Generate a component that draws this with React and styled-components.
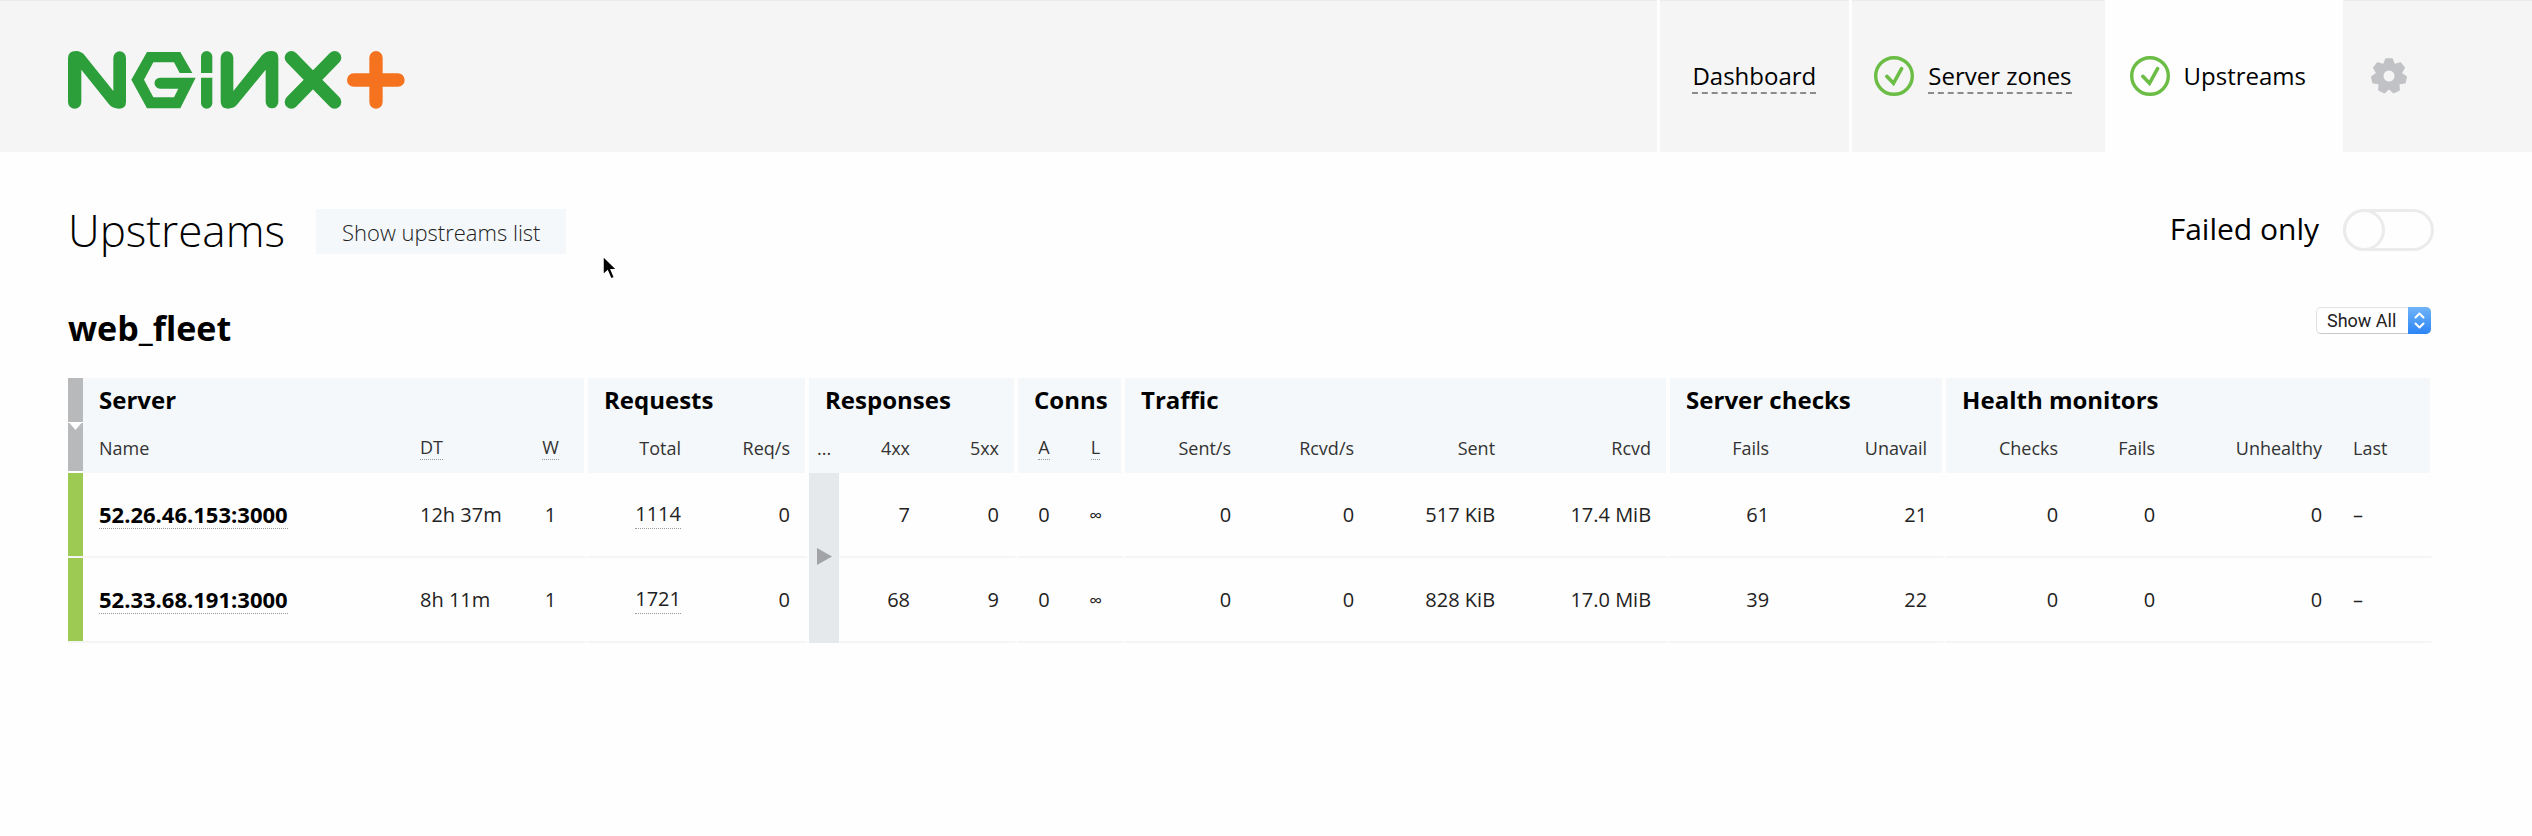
import React, { useState } from "react";
import styled, { createGlobalStyle, css } from "styled-components";

const GlobalStyle = createGlobalStyle`
  *, *::before { box-sizing: border-box; }
  body {
    margin: 0;
    background: #fefefe;
    color: #000;
    font-family: "Open Sans", "Noto Sans", sans-serif;
  }
`;

const Page = styled.div`
  position: relative;
  min-height: 100vh;
`;

const Header = styled.header`
  display: flex;
  height: 152px;
  padding-left: 68px;
  background: #f5f5f5;
  box-shadow: inset 0 1px #ebebeb;
`;

const LogoLink = styled.a`
  display: flex;
  align-items: center;
  height: 160px;
`;

const Nav = styled.nav`
  display: flex;
  margin-left: auto;
`;

const NavLink = styled.a`
  display: flex;
  align-items: center;
  gap: 14px;
  padding-left: ${(p) => (p.$icon ? "22px" : "32px")};
  padding-right: ${(p) => (p.$active ? "37px" : "33px")};
  border-left: 3px solid #fefefe;
  background: ${(p) => (p.$active ? "#fefefe" : "transparent")};
  color: #000;
  font-size: 24px;
  line-height: 32px;
  text-decoration: none;
`;

const NavText = styled.span`
  padding-top: 2px;
  border-bottom: 2px dashed ${(p) => (p.$active ? "transparent" : "#8c8c8c")};
`;

const SettingsButton = styled.button`
  display: flex;
  align-items: center;
  width: 189px;
  padding: 0 0 0 27px;
  border: 0;
  background: transparent;
`;

const Main = styled.main`
  padding: 57px 98px 60px 68px;
`;

const TitleBar = styled.div`
  display: flex;
  align-items: flex-start;
`;

const Title = styled.h1`
  margin: 0 31px 0 0;
  font-size: 44px;
  font-weight: 300;
  line-height: 42px;
`;

const ListButton = styled.button`
  height: 45px;
  padding: 0 26px;
  border: 0;
  background: #f4f8fa;
  color: #222;
  font: 300 22px/42px "Open Sans", sans-serif;
`;

const FailedOnly = styled.label`
  display: flex;
  gap: 24px;
  margin-left: auto;
  font-size: 30px;
  line-height: 40px;
`;

const Toggle = styled.input`
  appearance: none;
  display: flex;
  width: 91px;
  height: 42px;
  margin: 0;
  border-radius: 21px;
  box-shadow: inset 0 0 0 3px #ebebeb;

  &::before {
    content: "";
    width: 42px;
    height: 42px;
    border: 3px solid #ebebeb;
    border-radius: 50%;
  }

  &:checked {
    justify-content: flex-end;
    background: #d9efcf;
  }
`;

const GroupBar = styled.div`
  display: flex;
  justify-content: space-between;
  align-items: flex-start;
  margin: 52px 3px 28px 0;
`;

const GroupTitle = styled.h2`
  margin: 0;
  font-size: 34px;
  font-weight: 700;
  line-height: 44px;
`;

const SelectBox = styled.div`
  position: relative;
  width: 115px;
  height: 27px;
  margin-top: 1px;
`;

const Select = styled.select`
  appearance: none;
  width: 100%;
  height: 100%;
  padding: 0 0 0 10px;
  border: 1px solid #e2e2e2;
  border-bottom-color: #c8c8c8;
  border-radius: 5px;
  background: #fff;
  color: #222;
  font: 18px/24px Roboto, sans-serif;
`;

const SelectArrows = styled.span`
  position: absolute;
  top: 0;
  right: 0;
  bottom: 0;
  display: flex;
  align-items: center;
  justify-content: center;
  width: 23px;
  border-radius: 0 5px 5px 0;
  background: linear-gradient(#70b4f8, #2c85f5);
  pointer-events: none;
`;

const Table = styled.table`
  width: 100%;
  table-layout: fixed;
  border-collapse: separate;
  border-spacing: 0;
`;

const groupEnd = css`
  border-right: 4px solid #fefefe;
`;

const GroupHead = styled.th`
  height: 44px;
  padding: 0 0 0 16px;
  ${groupEnd}
  background: #f4f8fa;
  font-size: 24px;
  font-weight: 700;
  line-height: 44px;
  text-align: left;
  vertical-align: top;
  white-space: nowrap;
`;

const ColumnHead = styled.th`
  height: 51px;
  padding: ${(p) => (p.$align === "center" ? "0" : "0 15px 0 16px")};
  ${(p) => p.$end && groupEnd}
  background: #f4f8fa;
  color: #333;
  font-size: 18px;
  font-weight: 400;
  line-height: 24px;
  text-align: ${(p) => p.$align};
  white-space: nowrap;
`;

const StripHead = styled.th`
  padding: 0;
  background: #b8b9bb;
  border-bottom: ${(p) => (p.$last ? "2px solid #fefefe" : "0")};
  vertical-align: top;
`;

const SortButton = styled.button`
  display: block;
  width: 100%;
  padding: 0;
  border: 0;
  background: transparent;
`;

const StatusStrip = styled.td`
  padding: 0;
  background: #9dca52;
  border-bottom: 2px solid #f4f4f4;
`;

const Cell = styled.td`
  height: 85px;
  padding: ${(p) => (p.$align === "center" ? "0" : "0 15px 0 16px")};
  border-bottom: 2px solid #f5f5f5;
  ${(p) => p.$end && groupEnd}
  color: #222;
  font-size: 20px;
  line-height: 28px;
  text-align: ${(p) => p.$align};
  white-space: nowrap;
`;

const CollapsedCell = styled.td`
  padding: 0;
  background: #e6e9ec;
`;

const ExpandButton = styled.button`
  display: block;
  margin: 0 auto;
  padding: 0;
  border: 0;
  background: transparent;
`;

const Hint = styled.abbr`
  display: inline-block;
  border-bottom: 1px dotted #999;
  text-decoration: none;
`;

const ServerLink = styled.a`
  display: inline-block;
  border-bottom: 1px dotted #999;
  color: #000;
  font-size: 22px;
  font-weight: 700;
  text-decoration: none;
`;

const Infinity = styled.span`
  font-size: 18px;
`;

const Pointer = styled.svg`
  position: absolute;
  top: 254px;
  left: 601px;
  pointer-events: none;
`;

const Logo = () => (
  <svg width="337" height="58" viewBox="85 62 1011 174" role="img" aria-label="NGINX Plus">
    <g fill="#2d9f3a">
      <path d="M85 84Q85 62 109 62Q125 62 136 76L221 182V82A19 19 0 0 1 259 82V214Q259 235 238 235Q219 235 208 222L125 118V215A20 20 0 0 1 85 215Z" />
      <path d="M275 148L322 65H422L458 128H420L403 96H341L313 148L341 201H403L416 175H361A16 16 0 0 1 361 142H468L422 234H322Z" />
      <path d="M484 128V79A17 17 0 0 1 518 79V128ZM484 142H518V218A17 17 0 0 1 484 218Z" />
      <path d="M543 82A19 19 0 0 1 581 82V182L667 75Q678 62 696 62Q716 62 716 84V215A19 19 0 0 1 678 215V118L593 222Q583 235 564 235Q543 235 543 213Z" />
    </g>
    <g fill="none" strokeWidth="40" strokeLinecap="round">
      <path stroke="#2d9f3a" d="M755 82L885 215M885 82L755 215" />
      <path stroke="#f5731f" d="M942 149H1075M1009 82V215" />
    </g>
  </svg>
);

const CheckIcon = () => (
  <svg width="40" height="40" viewBox="0 0 40 40" fill="none" stroke="#6bbd45" aria-hidden="true">
    <circle cx="20" cy="20" r="18.3" strokeWidth="3.4" />
    <path d="M12.8 20.3L19.5 27.3L27.6 12.6" strokeWidth="3.6" strokeLinecap="round" />
  </svg>
);

const teeth = [0, 1, 2, 3, 4, 5, 6];

const GearIcon = () => (
  <svg width="38" height="38" viewBox="-19 -19 38 38" aria-hidden="true">
    <circle r="9.5" fill="none" stroke="#c1c2c5" strokeWidth="8" />
    {teeth.map((n) => (
      <path
        key={n}
        d="M-5 -12L-3 -17H3L5 -12Z"
        fill="#c1c2c5"
        stroke="#c1c2c5"
        strokeWidth="1.6"
        strokeLinejoin="round"
        transform={`rotate(${(n * 360) / 7})`}
      />
    ))}
  </svg>
);

const GROUPS = [
  { title: "Server", span: 3 },
  { title: "Requests", span: 2 },
  { title: "Responses", span: 3 },
  { title: "Conns", span: 2 },
  { title: "Traffic", span: 4 },
  { title: "Server checks", span: 2 },
  { title: "Health monitors", span: 4 },
];

const COLUMNS = [
  { key: "name", label: "Name", width: 321, align: "left" },
  { key: "dt", label: "DT", width: 113, align: "left", hint: "Total downtime" },
  { key: "w", label: "W", width: 71, align: "center", hint: "Weight", end: true },
  { key: "total", label: "Total", width: 108, align: "right" },
  { key: "reqs", label: "Req/s", width: 113, align: "right", end: true },
  { key: "more", label: "...", width: 30, align: "center" },
  { key: "r4", label: "4xx", width: 86, align: "right" },
  { key: "r5", label: "5xx", width: 93, align: "right", end: true },
  { key: "active", label: "A", width: 52, align: "center", hint: "Active" },
  { key: "limit", label: "L", width: 55, align: "center", hint: "Limit", end: true },
  { key: "sentS", label: "Sent/s", width: 121, align: "right" },
  { key: "rcvdS", label: "Rcvd/s", width: 123, align: "right" },
  { key: "sent", label: "Sent", width: 141, align: "right" },
  { key: "rcvd", label: "Rcvd", width: 160, align: "right", end: true },
  { key: "fails", label: "Fails", width: 114, align: "right" },
  { key: "unavail", label: "Unavail", width: 162, align: "right", end: true },
  { key: "checks", label: "Checks", width: 127, align: "right" },
  { key: "hFails", label: "Fails", width: 97, align: "right" },
  { key: "unhealthy", label: "Unhealthy", width: 167, align: "right" },
  { key: "last", label: "Last", width: 97, align: "left", end: true },
];

const SERVERS = [
  {
    name: "52.26.46.153:3000", dt: "12h 37m", w: "1", total: "1114", reqs: "0", r4: "7", r5: "0",
    active: "0", limit: "∞", sentS: "0", rcvdS: "0", sent: "517 KiB", rcvd: "17.4 MiB",
    fails: "61", unavail: "21", checks: "0", hFails: "0", unhealthy: "0", last: "–",
  },
  {
    name: "52.33.68.191:3000", dt: "8h 11m", w: "1", total: "1721", reqs: "0", r4: "68", r5: "9",
    active: "0", limit: "∞", sentS: "0", rcvdS: "0", sent: "828 KiB", rcvd: "17.0 MiB",
    fails: "39", unavail: "22", checks: "0", hFails: "0", unhealthy: "0", last: "–",
  },
];

const renderValue = (key, value) => {
  if (key === "name") return <ServerLink href="#server">{value}</ServerLink>;
  if (key === "total") return <Hint>{value}</Hint>;
  if (key === "limit") return <Infinity>{value}</Infinity>;
  return value;
};

function ServerRow({ server, first }) {
  return (
    <tr>
      <StatusStrip />
      {COLUMNS.map((c) => {
        if (c.key === "more") {
          return first ? (
            <CollapsedCell key={c.key} rowSpan={SERVERS.length}>
              <ExpandButton aria-label="Expand responses">
                <svg width="15" height="17" viewBox="0 0 15 17" aria-hidden="true">
                  <path d="M0 0L15 8.5L0 17Z" fill="#a1a3a6" />
                </svg>
              </ExpandButton>
            </CollapsedCell>
          ) : null;
        }
        return (
          <Cell key={c.key} $align={c.align} $end={c.end}>
            {renderValue(c.key, server[c.key])}
          </Cell>
        );
      })}
    </tr>
  );
}

export default function App() {
  const [failedOnly, setFailedOnly] = useState(false);
  return (
    <Page>
      <GlobalStyle />
      <Header>
        <LogoLink href="#home">
          <Logo />
        </LogoLink>
        <Nav>
          <NavLink href="#dashboard">
            <NavText>Dashboard</NavText>
          </NavLink>
          <NavLink href="#zones" $icon>
            <CheckIcon />
            <NavText>Server zones</NavText>
          </NavLink>
          <NavLink href="#upstreams" $icon $active>
            <CheckIcon />
            <NavText $active>Upstreams</NavText>
          </NavLink>
        </Nav>
        <SettingsButton aria-label="Settings">
          <GearIcon />
        </SettingsButton>
      </Header>
      <Main>
        <TitleBar>
          <Title>Upstreams</Title>
          <ListButton>Show upstreams list</ListButton>
          <FailedOnly>
            Failed only
            <Toggle
              type="checkbox"
              checked={failedOnly}
              onChange={(e) => setFailedOnly(e.target.checked)}
            />
          </FailedOnly>
        </TitleBar>
        <GroupBar>
          <GroupTitle>web_fleet</GroupTitle>
          <SelectBox>
            <Select aria-label="Filter servers">
              <option>Show All</option>
            </Select>
            <SelectArrows>
              <svg width="11" height="17" viewBox="0 0 11 17" fill="none" stroke="#fff" strokeWidth="2" strokeLinecap="round" strokeLinejoin="round" aria-hidden="true">
                <path d="M1.5 5.5L5.5 1.5L9.5 5.5M1.5 11.5L5.5 15.5L9.5 11.5" />
              </svg>
            </SelectArrows>
          </SelectBox>
        </GroupBar>
        <Table aria-label="web_fleet servers">
          <colgroup>
            <col width="15" />
            {COLUMNS.map((c) => (
              <col key={c.key} width={c.width} />
            ))}
          </colgroup>
          <thead>
            <tr>
              <StripHead />
              {GROUPS.map((g) => (
                <GroupHead key={g.title} colSpan={g.span} scope="colgroup">
                  {g.title}
                </GroupHead>
              ))}
            </tr>
            <tr>
              <StripHead $last>
                <SortButton aria-label="Sort by status">
                  <svg width="15" height="8" viewBox="0 0 15 8" display="block" aria-hidden="true">
                    <path d="M0 0H15V1H13.5L7.5 8L1.5 1H0Z" fill="#fff" />
                  </svg>
                </SortButton>
              </StripHead>
              {COLUMNS.map((c) => (
                <ColumnHead key={c.key} $align={c.align} $end={c.end} scope="col">
                  {c.hint ? <Hint title={c.hint}>{c.label}</Hint> : c.label}
                </ColumnHead>
              ))}
            </tr>
          </thead>
          <tbody>
            {SERVERS.map((s, i) => (
              <ServerRow key={s.name} server={s} first={i === 0} />
            ))}
          </tbody>
        </Table>
      </Main>
      <Pointer width="18" height="28" viewBox="0 0 18 28" aria-hidden="true">
        <path
          d="M2 2V21L6.5 17L10 25L13.5 23.5L10.2 15.8H16Z"
          fill="#000"
          stroke="#fff"
          strokeWidth="1.5"
        />
      </Pointer>
    </Page>
  );
}
